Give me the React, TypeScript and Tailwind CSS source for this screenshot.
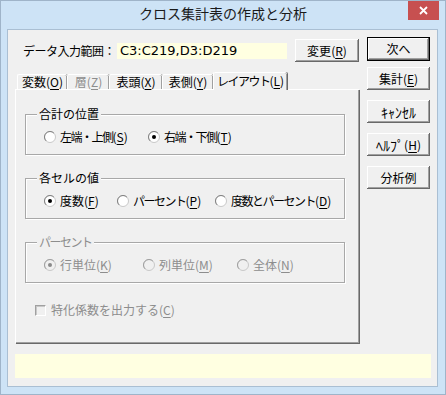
import React from "react";

const FONT = "font-['Noto_Sans_CJK_JP','Noto_Sans',sans-serif]";

function Acc({ text, k, tight }: { text: string; k: string; tight?: boolean }) {
  return (
    <span className="whitespace-nowrap">
      <span className={tight ? "tracking-[-1.5px]" : ""}>{text}</span>(
      <span className="underline underline-offset-[2px] decoration-1">{k}</span>)
    </span>
  );
}

function RadioDot({ checked, disabled }: { checked?: boolean; disabled?: boolean }) {
  return (
    <svg width="12" height="12" viewBox="0 0 12 12" className="shrink-0">
      <circle cx="6" cy="6" r="5.5" fill={disabled ? "#f0f0f0" : "#ffffff"} stroke="#c8c8c8" />
      <path d="M2.1 9.9 A5.5 5.5 0 0 1 9.9 2.1" fill="none" stroke={disabled ? "#a0a0a0" : "#808080"} />
      {checked && <circle cx="6" cy="6" r="2" fill={disabled ? "#8a8a8a" : "#000000"} />}
    </svg>
  );
}

function Radio({
  text,
  k,
  checked,
  disabled,
  w,
  tight,
}: {
  text: string;
  k: string;
  checked?: boolean;
  disabled?: boolean;
  w: string;
  tight?: boolean;
}) {
  return (
    <div className={`flex items-center gap-[4px] ${w} ${disabled ? "text-[#8d8d8d]" : "text-black"}`}>
      <RadioDot checked={checked} disabled={disabled} />
      <span className="leading-[14px]">
        <Acc text={text} k={k} tight={tight} />
      </span>
    </div>
  );
}

function Group({ title, disabled, children }: { title: string; disabled?: boolean; children: React.ReactNode }) {
  return (
    <div className="relative ml-[9px] w-[320px] h-[41px] border border-[#a8a8a8] shadow-[inset_1px_1px_#ffffff,1px_1px_#ffffff]">
      <span
        className={`absolute -top-[8px] left-[11px] px-[2px] h-[14px] leading-[14px] bg-[#f0f0f0] whitespace-nowrap ${
          disabled ? "text-[#8d8d8d] tracking-[-1.5px]" : "text-black"
        }`}
      >
        {title}
      </span>
      <div className="flex items-center pl-[18px] pt-[16px] h-[28px]">{children}</div>
    </div>
  );
}

function Btn({ children, def, className = "" }: { children: React.ReactNode; def?: boolean; className?: string }) {
  return (
    <div
      className={`flex items-center justify-center bg-[#f0f0f0] leading-none text-black whitespace-nowrap ${
        def
          ? "border border-black shadow-[inset_-1px_-1px_#696969,inset_1px_1px_#ffffff,inset_-2px_-2px_#a0a0a0]"
          : "shadow-[inset_-1px_-1px_#696969,inset_1px_1px_#ffffff,inset_-2px_-2px_#a0a0a0]"
      } ${className}`}
    >
      {children}
    </div>
  );
}

const tabs = [
  { t: "変数", k: "O", w: "w-[50px]" },
  { t: "層", k: "Z", w: "w-[42px]", disabled: true },
  { t: "表頭", k: "X", w: "w-[53px]" },
  { t: "表側", k: "Y", w: "w-[51px]" },
];

export default function App() {
  return (
    <div className={`w-[446px] h-[395px] bg-[#cde3f6] border border-[#9fb4c9] relative text-[12px] ${FONT}`}>
      {/* title bar */}
      <div className="h-[28px] flex items-center justify-center pb-[3px] text-[14px] text-[#1a1a1a]">
        クロス集計表の作成と分析
      </div>
      <div className="absolute top-0 right-[6px] w-[31px] h-[19px] bg-[#c75050] flex items-center justify-center">
        <svg width="9" height="9" viewBox="0 0 9 9">
          <path d="M1 1 L8 8 M8 1 L1 8" stroke="#ffffff" strokeWidth="1.8" />
        </svg>
      </div>

      {/* client area */}
      <div className="ml-[6px] w-[431px] h-[358px] bg-[#f0f0f0] border border-[#aabfd3] flex flex-col">
        <div className="flex">
          {/* left column */}
          <div className="pl-[7px] w-[351px]">
            <div className="mt-[9px] h-[23px] flex items-center">
              <div className="ml-[8px] w-[94px] whitespace-nowrap leading-none">
                <span className="tracking-[-0.5px]">データ入力範囲</span>：
              </div>
              <div className="w-[170px] h-[16px] bg-[#ffffe1] pl-[3px] flex items-center font-['DejaVu_Sans',sans-serif] text-[13px] text-black leading-none">
                C3:C219,D3:D219
              </div>
              <Btn className="ml-[8px] w-[64px] h-[23px]">
                <Acc text="変更" k="R" />
              </Btn>
            </div>

            {/* tabs */}
            <div className="mt-[10px] ml-[2px] h-[17px] flex items-end">
              {tabs.map((tab) => (
                <div
                  key={tab.t}
                  className={`${tab.w} h-[15px] flex items-center justify-center leading-none border-l border-t border-white rounded-t-[2px] shadow-[inset_-1px_0_#a0a0a0,1px_0_#696969] ${
                    tab.disabled ? "text-[#8d8d8d]" : "text-black"
                  }`}
                >
                  <Acc text={tab.t} k={tab.k} />
                </div>
              ))}
              <div className="relative z-10 w-[74px] h-[18px] -mb-[1px] bg-[#f0f0f0] flex items-start justify-center pt-[2px] leading-none border-l border-t border-white rounded-t-[2px] shadow-[inset_-1px_0_#a0a0a0,1px_0_#696969]">
                <Acc text="レイアウト" k="L" tight />
              </div>
            </div>

            {/* panel */}
            <div className="w-[344px] h-[254px] border-l border-t border-white shadow-[inset_-1px_-1px_#a0a0a0,1px_1px_#696969] pt-[24px]">
              <Group title="合計の位置">
                <Radio text="左端・上側" k="S" w="w-[104px]" tight />
                <Radio text="右端・下側" k="T" w="w-[120px]" checked tight />
              </Group>
              <div className="h-[23px]" />
              <Group title="各セルの値">
                <Radio text="度数" k="F" w="w-[73px]" checked />
                <Radio text="パーセント" k="P" w="w-[98px]" tight />
                <Radio text="度数とパーセント" k="D" w="w-[120px]" tight />
              </Group>
              <div className="h-[23px]" />
              <Group title="パーセント" disabled>
                <Radio text="行単位" k="K" w="w-[99px]" checked disabled />
                <Radio text="列単位" k="M" w="w-[94px]" disabled />
                <Radio text="全体" k="N" w="w-[80px]" disabled />
              </Group>
              <div className="mt-[21px] ml-[19px] flex items-center gap-[5px] text-[#8d8d8d]">
                <div className="w-[11px] h-[11px] border-l border-t border-[#a0a0a0] border-r border-b border-r-white border-b-white bg-[#f0f0f0] shadow-[inset_1px_1px_#c8c8c8]" />
                <span className="leading-[12px]">
                  <Acc text="特化係数を出力する" k="C" />
                </span>
              </div>
            </div>
          </div>

          {/* right column */}
          <div className="ml-[8px] w-[63px] flex flex-col">
            <Btn def className="mt-[7px] h-[24px]">次へ</Btn>
            <Btn className="mt-[6px] h-[23px]">
              <Acc text="集計" k="E" />
            </Btn>
            <Btn className="mt-[10px] h-[23px] text-[14px]">ｷｬﾝｾﾙ</Btn>
            <Btn className="mt-[10px] h-[23px]">
              <span className="text-[14px]">ﾍﾙﾌﾟ</span>
              <span className="whitespace-nowrap">
                (<span className="underline underline-offset-[2px] decoration-1">H</span>)
              </span>
            </Btn>
            <Btn className="mt-[10px] h-[23px]">分析例</Btn>
          </div>
        </div>

        {/* status bar */}
        <div className="mt-[11px] ml-[7px] w-[416px] h-[24px] bg-[#ffffe1]" />
      </div>
    </div>
  );
}
